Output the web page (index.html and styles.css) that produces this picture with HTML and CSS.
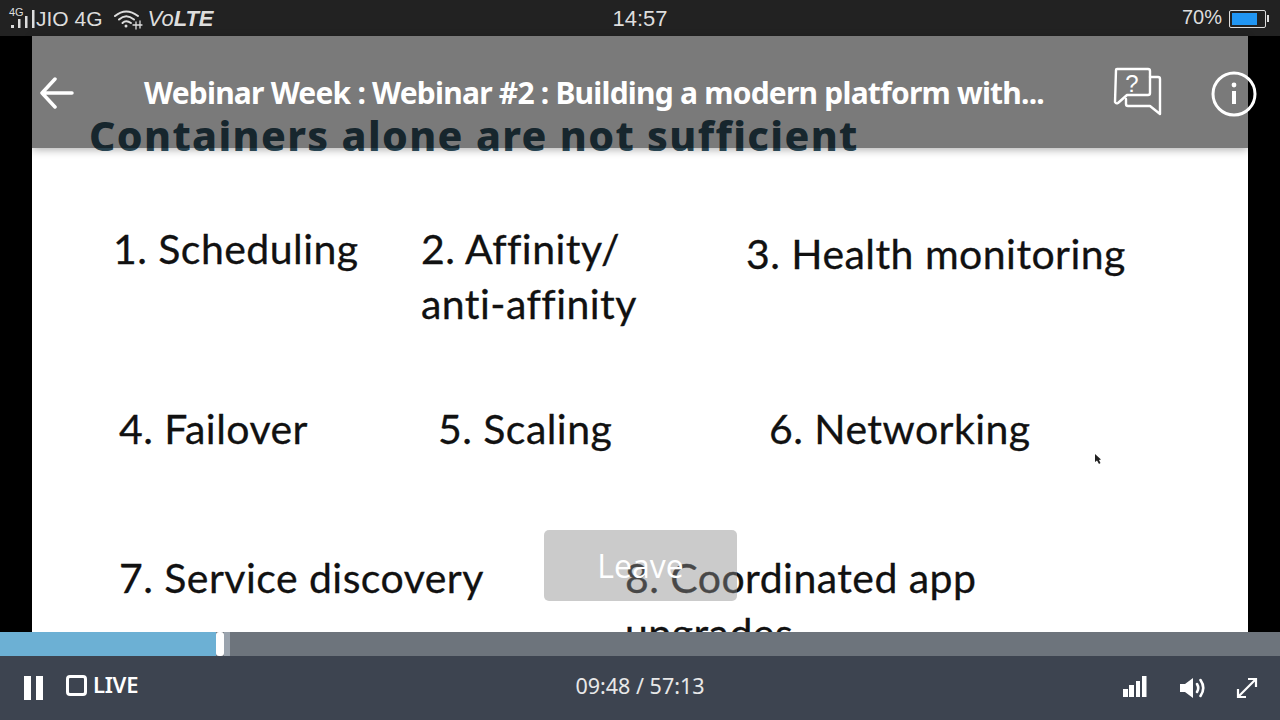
FILE: index.html
```html
<!DOCTYPE html>
<html lang="en">
<head>
    <meta charset="UTF-8">
    <meta name="viewport" content="width=device-width, initial-scale=1.0">
    <title>Webinar Player</title>
    <link rel="stylesheet" href="styles.css">
</head>
<body>
    <div class="status-bar">
        <div class="status-left">
            <svg class="signal-icon" width="36" height="24" viewBox="0 0 36 24">
                <text x="9" y="9" class="signal-label">4G</text>
                <rect x="11" y="18" width="3" height="3" fill="#ddd"/>
                <rect x="18" y="12" width="2.500" height="9" fill="#ddd"/>
                <rect x="25" y="9" width="2.500" height="12" fill="#ddd"/>
                <rect x="32" y="3" width="2.500" height="18" fill="#ddd"/>
            </svg>
            <span class="carrier">JIO 4G</span>
            <svg class="wifi-icon" width="30" height="22" viewBox="0 0 30 22" fill="none" stroke="#ddd" stroke-width="2" stroke-linecap="round">
                <path d="M2 8 Q13 -1 25 8"/>
                <path d="M6 11.500 Q13 5 21 11.500"/>
                <path d="M9.500 15 Q13 11.500 18 15"/>
                <circle cx="13" cy="18" r="1.500" fill="#ddd" stroke="none"/>
                <path d="M23 14 L23 21 M27 13 L27 20 M20 17 H29" stroke-width="1.300"/>
            </svg>
            <span class="volte">Vo<b>LTE</b></span>
        </div>
        <div class="status-time">14:57</div>
        <div class="status-right">
            <span class="battery-text">70%</span>
            <div class="battery">
                <div class="battery-fill"></div>
            </div>
            <div class="battery-tip"></div>
        </div>
    </div>

    <div class="stage">
        <div class="slide">
            <div class="slide-content">
                <h1 class="slide-title">Containers alone are not sufficient</h1>
                <div class="slide-item item-1">1. Scheduling</div>
                <div class="slide-item item-2">2. Affinity/<br>anti-affinity</div>
                <div class="slide-item item-3">3. Health monitoring</div>
                <div class="slide-item item-4">4. Failover</div>
                <div class="slide-item item-5">5. Scaling</div>
                <div class="slide-item item-6">6. Networking</div>
                <div class="slide-item item-7">7. Service discovery</div>
                <div class="slide-item item-8">8. Coordinated app<br>upgrades</div>
                <svg class="cursor" width="8" height="12" viewBox="0 0 8 12">
                    <path d="M1 0 L1 8 L3 6.500 L5 10 L6.500 9 L5 6 L7 5.500 Z" fill="#222"/>
                </svg>
            </div>
            <div class="header-overlay">
                <svg class="back-icon" width="36" height="32" viewBox="0 0 36 32" fill="none" stroke="#fff" stroke-width="3.500" stroke-linecap="round" stroke-linejoin="round">
                    <path d="M33 16 H3 M16 2 L3 16 L16 30"/>
                </svg>
                <div class="webinar-title">Webinar Week : Webinar #2 : Building a modern platform with...</div>
                <svg class="question-icon" width="50" height="50" viewBox="0 0 50 50" fill="none" stroke="#fff" stroke-width="2.400" stroke-linejoin="round" stroke-linecap="round">
                    <path d="M3 3 Q3 2 4 2 H35 Q37 2 37 4 V26 Q37 28 35 28 H14 L5 36 Q3 37 2 35 Z" transform="translate(1 0)"/>
                    <path d="M38 10 H46 Q48 10 48 12 V47 L38 39 H16 Q14 39 14 37 V32"/>
                    <text x="20" y="25" class="question-mark">?</text>
                </svg>
                <svg class="info-icon" width="46" height="46" viewBox="0 0 46 46" fill="none" stroke="#fff">
                    <circle cx="23" cy="23" r="21" stroke-width="3"/>
                    <circle cx="23" cy="14" r="2.400" fill="#fff" stroke="none"/>
                    <rect x="21" y="20" width="4" height="13" fill="#fff" stroke="none"/>
                </svg>
            </div>
            <div class="leave-btn">Leave</div>
        </div>
    </div>

    <div class="seek-bar">
        <div class="seek-played"></div>
        <div class="seek-handle"></div>
        <div class="seek-buffer"></div>
    </div>

    <div class="controls">
        <div class="controls-left">
            <div class="pause-icon"><span></span><span></span></div>
            <div class="live">
                <span class="live-box"></span>
                <span class="live-text">LIVE</span>
            </div>
        </div>
        <div class="controls-time">09:48 / 57:13</div>
        <div class="controls-right">
            <svg class="quality-icon" width="24" height="22" viewBox="0 0 24 22" fill="#fff">
                <rect x="0" y="13" width="5" height="8"/>
                <rect x="6" y="9" width="5" height="12"/>
                <rect x="13" y="5" width="4" height="16"/>
                <rect x="19" y="0" width="4.500" height="21"/>
            </svg>
            <svg width="28" height="24" viewBox="0 0 28 24" fill="none" stroke="#fff" stroke-width="2.600" stroke-linecap="round">
                <path d="M1 8 H6 L14 2 V22 L6 16 H1 Z" fill="#fff" stroke="none"/>
                <path d="M18 8 Q20.500 12 18 16"/>
                <path d="M21.500 4 Q27 12 21.500 20"/>
            </svg>
            <svg width="22" height="22" viewBox="0 0 22 22" fill="none" stroke="#fff" stroke-width="2.200">
                <path d="M2 20 L20 2 M12 2 H20 V10 M2 12 V20 H10"/>
            </svg>
        </div>
    </div>
</body>
</html>
```

FILE: styles.css
```css
* {
    box-sizing: border-box;
}
html, body {
    margin: 0;
    height: 100%;
    overflow: hidden;
}
body {
    display: flex;
    flex-direction: column;
    width: 1280px;
    height: 720px;
    font-family: "Liberation Sans", Arial, sans-serif;
    background-color: #000;
}

/* phone status bar */
.status-bar {
    display: flex;
    align-items: center;
    justify-content: space-between;
    height: 36px;
    padding: 1px 11px 0 0;
    background-color: #222;
    color: #ddd;
    font-size: 21px;
    position: relative;
    flex-shrink: 0;
}
.status-left, .status-right {
    display: flex;
    align-items: center;
}
.signal-label {
    font-size: 11px;
    font-family: "Liberation Sans", Arial, sans-serif;
    fill: #ddd;
}
.carrier {
    font-size: 21px;
}
.wifi-icon {
    margin-left: 10px;
}
.volte {
    margin-left: 5px;
    font-style: italic;
    font-size: 22px;
}
.status-time {
    position: absolute;
    left: 0;
    right: 0;
    text-align: center;
    font-size: 22px;
}
.battery-text {
    font-size: 20px;
    margin-bottom: 2px;
}
.battery {
    width: 37px;
    height: 18px;
    margin-left: 7px;
    padding: 2px;
    border: 1px solid #ddd;
    border-radius: 2px;
}
.battery-fill {
    width: 25px;
    height: 100%;
    background-color: #2196f3;
}
.battery-tip {
    width: 2px;
    height: 7px;
    margin-left: 1px;
    background-color: #ddd;
}

/* video area */
.stage {
    flex: 1;
    padding: 0 32px;
    min-height: 0;
}
.slide {
    position: relative;
    height: 100%;
    background-color: #fff;
    font-family: Lato, sans-serif;
    color: #111;
}
.slide-content {
    position: absolute;
    top: 0;
    left: 0;
    right: 0;
    bottom: 0;
    overflow: hidden;
}
.slide-title {
    position: absolute;
    left: 57px;
    top: 71px;
    margin: 0;
    font-family: "Noto Sans", sans-serif;
    font-size: 41px;
    line-height: 56px;
    font-weight: 800;
    letter-spacing: 1.37px;
    color: #30505f;
    white-space: nowrap;
}
.slide-item {
    position: absolute;
    font-size: 41px;
    line-height: 55px;
    white-space: nowrap;
    letter-spacing: 0.45px;
    -webkit-text-stroke: 0.3px #111;
}
.item-1 { left: 81px; top: 185px; }
.item-2 { left: 389px; top: 185px; }
.item-3 { left: 714px; top: 190px; }
.item-4 { left: 87px; top: 365px; }
.item-5 { left: 406px; top: 365px; }
.item-6 { left: 737px; top: 365px; }
.item-7 { left: 87px; top: 514px; }
.item-8 { left: 593px; top: 514px; }
.cursor {
    position: absolute;
    left: 1062px;
    top: 418px;
}
.header-overlay {
    position: absolute;
    top: 0;
    left: 0;
    right: 0;
    height: 112px;
    display: flex;
    align-items: center;
    background-color: rgba(0, 0, 0, 0.52);
    box-shadow: 0 2px 8px rgba(0, 0, 0, 0.3);
    padding: 0 0 0 7px;
    color: #fff;
}
.back-icon {
    flex-shrink: 0;
    margin-top: 1px;
}
.webinar-title {
    flex-shrink: 0;
    margin-left: 69px;
    width: 908px;
    font-family: "Noto Sans", sans-serif;
    font-size: 30px;
    font-weight: 700;
    letter-spacing: -0.78px;
    white-space: nowrap;
}
.question-icon {
    margin-left: 60px;
    flex-shrink: 0;
}
.question-mark {
    font-family: "Liberation Sans", Arial, sans-serif;
    font-size: 24px;
    fill: #fff;
    stroke: none;
    text-anchor: middle;
}
.info-icon {
    margin-left: 49px;
    margin-top: 3px;
    flex-shrink: 0;
}
.leave-btn {
    position: absolute;
    left: 512px;
    top: 494px;
    width: 193px;
    height: 71px;
    padding-top: 18px;
    text-align: center;
    font-family: "Open Sans", sans-serif;
    font-size: 32px;
    line-height: 36px;
    color: #fff;
    background-color: rgba(140, 140, 140, 0.45);
    border-radius: 5px;
}

/* player bars */
.seek-bar {
    display: flex;
    height: 24px;
    background-color: #6d747c;
    flex-shrink: 0;
}
.seek-played {
    width: 216px;
    background-color: #6cb0d4;
}
.seek-handle {
    width: 8px;
    background-color: #fff;
    border-radius: 3px;
}
.seek-buffer {
    width: 6px;
    background-color: #9aa3ad;
}
.controls {
    position: relative;
    display: flex;
    align-items: center;
    justify-content: space-between;
    height: 64px;
    padding: 0 24px;
    background-color: #3d4450;
    color: #fff;
    flex-shrink: 0;
}
.controls-left {
    display: flex;
    align-items: center;
    gap: 23px;
}
.pause-icon {
    display: flex;
    gap: 5px;
}
.pause-icon span {
    display: block;
    width: 7px;
    height: 24px;
    background-color: #fff;
}
.live {
    display: flex;
    align-items: center;
    gap: 6px;
    margin-top: -5px;
}
.live-box {
    display: block;
    width: 21px;
    height: 21px;
    border: 3px solid #fff;
    border-radius: 4px;
}
.live-text {
    font-family: "Noto Sans", sans-serif;
    font-size: 22px;
    font-weight: 600;
    letter-spacing: -0.3px;
    margin-top: -3px;
}
.controls-time {
    position: absolute;
    left: 0;
    right: 0;
    padding-bottom: 5px;
    text-align: center;
    font-family: "Noto Sans", sans-serif;
    font-size: 21.5px;
    color: #e8e8e8;
}
.controls-right {
    display: flex;
    align-items: center;
    gap: 29px;
    margin-right: -2px;
}
.quality-icon {
    margin-right: 3px;
    margin-top: -3px;
}
```
